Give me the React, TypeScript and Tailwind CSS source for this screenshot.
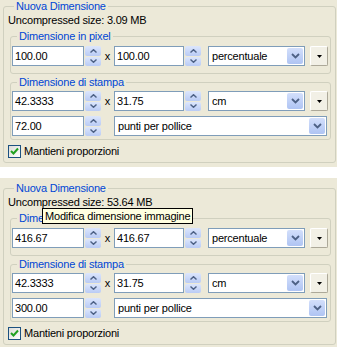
import type React from "react"

type PanelData = {
  size: string
  width: string
  height: string
  printW: string
  printH: string
  dpi: string
}

const panels: PanelData[] = [
  { size: "3.09 MB", width: "100.00", height: "100.00", printW: "42.3333", printH: "31.75", dpi: "72.00" },
  { size: "53.64 MB", width: "416.67", height: "416.67", printW: "42.3333", printH: "31.75", dpi: "300.00" },
]

const Chevron: React.FC<{ up?: boolean }> = ({ up }) => (
  <svg width="7" height="4" viewBox="0 0 7 4">
    <path
      d={up ? "M0.5 3.5 L3.5 0.7 L6.5 3.5" : "M0.5 0.5 L3.5 3.3 L6.5 0.5"}
      stroke="#4D6185"
      strokeWidth="1.4"
      fill="none"
    />
  </svg>
)

const Spinner: React.FC = () => (
  <div className="flex flex-col w-[16px] h-[20px] gap-[1px] ml-[1px] shrink-0">
    <div className="flex-1 rounded-[2px] bg-linear-to-b from-[#DCE6FC] to-[#B9CBF5] flex items-center justify-center">
      <Chevron up />
    </div>
    <div className="flex-1 rounded-[2px] bg-linear-to-b from-[#DCE6FC] to-[#B9CBF5] flex items-center justify-center">
      <Chevron />
    </div>
  </div>
)

const TextBox: React.FC<{ value: string; width: string }> = ({ value, width }) => (
  <div className={`${width} h-[20px] shrink-0 border border-[#7F9DB9] bg-white pl-[2px] flex items-center`}>
    {value}
  </div>
)

const Combo: React.FC<{ value: string; width: string; className?: string }> = ({ value, width, className }) => (
  <div className={`${width} ${className ?? ""} h-[20px] shrink-0 border border-[#7F9DB9] bg-white flex items-stretch`}>
    <span className="flex-1 pl-[3px] flex items-center">{value}</span>
    <div className="w-[16px] m-[1px] rounded-[2px] bg-linear-to-b from-[#D3DFFB] to-[#AFC4F3] flex items-center justify-center">
      <svg width="9" height="6" viewBox="0 0 9 6">
        <path d="M1 1 L4.5 4.5 L8 1" stroke="#4D6185" strokeWidth="1.8" fill="none" />
      </svg>
    </div>
  </div>
)

const MenuButton: React.FC = () => (
  <div className="w-[18px] h-[20px] ml-[5px] shrink-0 rounded-[2px] border border-t-[#FFFFFF] border-l-[#FFFFFF] border-r-[#ACA899] border-b-[#ACA899] bg-[#F2F0E6] flex items-center justify-center">
    <svg width="5" height="3" viewBox="0 0 5 3">
      <path d="M0 0 H5 L2.5 3 Z" fill="#000" />
    </svg>
  </div>
)

const GroupBox: React.FC<{ title: string; className?: string; children: React.ReactNode }> = ({
  title,
  className,
  children,
}) => (
  <fieldset className={`border border-[#D0D0BF] rounded-[3px] ${className ?? ""}`}>
    <legend className="ml-[5px] px-[2px] leading-[13px] text-[#0046D5]">{title}</legend>
    {children}
  </fieldset>
)

const Panel: React.FC<{ data: PanelData; tooltip?: boolean; className?: string }> = ({ data, tooltip, className }) => (
  <div className={`relative bg-[#ECE9D8] ${className ?? ""}`}>
    <fieldset className="ml-[3px] w-[333px] border border-[#D0D0BF] rounded-[3px] pl-[4px] pb-[4px]">
      <legend className="ml-[6px] px-[2px] leading-[13px] text-[#0046D5]">Nuova Dimensione</legend>
      <div className="mt-[1px] leading-[13px]">Uncompressed size: {data.size}</div>

      <GroupBox title="Dimensione in pixel" className="mt-[3px] ml-[2px] w-[321px] pt-[3px] pb-[7px] pl-[1px]">
        <div className="flex items-center">
          <TextBox value={data.width} width="w-[72px]" />
          <Spinner />
          <span className="w-[13px] text-center">x</span>
          <TextBox value={data.height} width="w-[70px]" />
          <Spinner />
          <Combo value="percentuale" width="w-[97px]" className="ml-[7px]" />
          <MenuButton />
        </div>
      </GroupBox>

      <GroupBox title="Dimensione di stampa" className="mt-[2px] ml-[2px] w-[321px] pt-[2px] pb-[3px] pl-[1px]">
        <div className="flex items-center">
          <TextBox value={data.printW} width="w-[72px]" />
          <Spinner />
          <span className="w-[13px] text-center">x</span>
          <TextBox value={data.printH} width="w-[70px]" />
          <Spinner />
          <Combo value="cm" width="w-[97px]" className="ml-[7px]" />
          <MenuButton />
        </div>
        <div className="flex items-center mt-[5px]">
          <TextBox value={data.dpi} width="w-[72px]" />
          <Spinner />
          <Combo value="punti per pollice" width="w-[213px]" className="ml-[13px]" />
        </div>
      </GroupBox>

      <label className="flex items-center mt-[5px] leading-[13px]">
        <span className="w-[13px] h-[13px] border border-[#1C5180] bg-linear-to-br from-[#DCDCD7] to-[#FFFFFF] flex items-center justify-center">
          <svg width="9" height="9" viewBox="0 0 9 9">
            <path d="M1 4 L3.5 6.5 L8 1.5" stroke="#21A121" strokeWidth="2" fill="none" />
          </svg>
        </span>
        <span className="ml-[3px]">Mantieni proporzioni</span>
      </label>
    </fieldset>

    {tooltip && (
      <div className="absolute left-[42px] top-[30px] h-[16px] px-[2px] border border-black bg-[#FFFFE1] leading-[14px] whitespace-nowrap">
        Modifica dimensione immagine
      </div>
    )}
  </div>
)

export default function App() {
  return (
    <div
      className="w-[337px] h-[347px] overflow-hidden bg-white text-[11px] text-black tracking-[-0.2px]"
      style={{ fontFamily: '"Liberation Sans", Arial, sans-serif' }}
    >
      <Panel data={panels[0]} className="h-[167px]" />
      <Panel data={panels[1]} tooltip className="mt-[11px] pt-[4px] h-[200px]" />
    </div>
  )
}
